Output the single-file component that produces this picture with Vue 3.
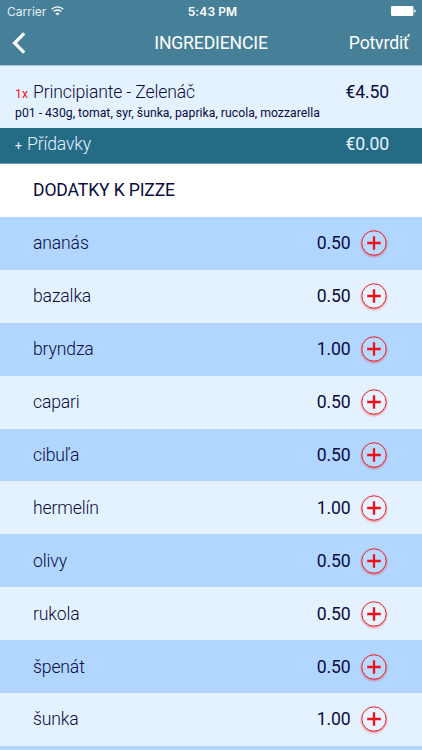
<template>
  <div class="screen">
    <header class="header">
      <div class="status">
        <div class="carrier">
          <span>Carrier</span>
          <svg class="wifi" viewBox="0 0 12 9">
            <path d="M0.5 3.1a7.8 7.8 0 0 1 11 0" />
            <path d="M2.4 5.2a5.1 5.1 0 0 1 7.2 0" />
            <path class="dot" d="M6 9L4 7a2.9 2.9 0 0 1 4 0z" />
          </svg>
        </div>
        <span class="time">5:43 PM</span>
        <svg class="battery" viewBox="0 0 25 10">
          <rect x="0" y="0" width="22.4" height="10" rx="1.2" />
          <path d="M23.2 3.2q1.5 .4 1.5 1.8t-1.5 1.8z" />
        </svg>
      </div>
      <nav class="navbar">
        <svg class="back" viewBox="0 0 14 22">
          <path d="M12.2 1.3L2.6 11L12.2 20.7" />
        </svg>
        <h1>INGREDIENCIE</h1>
        <a class="confirm">Potvrdiť</a>
      </nav>
    </header>

    <section class="product">
      <div class="line">
        <span class="count">1x</span>
        <span class="name">Principiante - Zelenáč</span>
        <span class="price">€4.50</span>
      </div>
      <div class="description">p01 - 430g, tomat, syr, šunka, paprika, rucola, mozzarella</div>
    </section>

    <section class="extras">
      <span class="plus">+</span>
      <span class="name">Přídavky</span>
      <span class="price">€0.00</span>
    </section>

    <h2>DODATKY K PIZZE</h2>

    <ul class="list">
      <li v-for="item in ingredients" :key="item.name">
        <span class="name">{{ item.name }}</span>
        <span class="price">{{ item.price }}</span>
        <button class="add">
          <svg viewBox="0 0 26 26">
            <circle cx="13" cy="13" r="12.2" />
            <path d="M6.2 13h13.6M13 6.2v13.6" />
          </svg>
        </button>
      </li>
      <li></li>
    </ul>
  </div>
</template>

<script setup>
import { ref } from 'vue';

const ingredients = ref([
  { name: 'ananás', price: '0.50' },
  { name: 'bazalka', price: '0.50' },
  { name: 'bryndza', price: '1.00' },
  { name: 'capari', price: '0.50' },
  { name: 'cibuľa', price: '0.50' },
  { name: 'hermelín', price: '1.00' },
  { name: 'olivy', price: '0.50' },
  { name: 'rukola', price: '0.50' },
  { name: 'špenát', price: '0.50' },
  { name: 'šunka', price: '1.00' },
]);
</script>

<style>
body {
  margin: 0;
  overflow: hidden;
}
</style>

<style scoped>
.screen {
  height: 750px;
  overflow: hidden;
  background: #fff;
  color: #0b0b40;
  font-family: Roboto, sans-serif;
  font-size: 17.6px;
  letter-spacing: -0.15px;
}

.header {
  height: 65px;
  box-sizing: border-box;
  background: #467f98;
  color: #fff;
}

.status {
  display: grid;
  grid-template-columns: 1fr auto 1fr;
  align-items: center;
  height: 22px;
  padding: 0 6px 0 7px;
  font-family: Inter, sans-serif;
  font-size: 12px;
  letter-spacing: 0;
}

.carrier {
  display: flex;
  align-items: center;
  gap: 5px;
  color: #e6f0f4;
}

.wifi {
  width: 13px;
  height: 9.5px;
  fill: none;
  stroke: #fff;
  stroke-width: 1.4;
}

.wifi .dot {
  fill: #fff;
  stroke: none;
}

.time {
  padding-left: 2px;
  font-weight: 600;
  letter-spacing: 0.1px;
}

.battery {
  justify-self: end;
  width: 25px;
  height: 10px;
  fill: #fff;
}

.navbar {
  display: grid;
  grid-template-columns: 1fr auto 1fr;
  align-items: center;
  height: 42px;
  padding: 0 12px;
}

.back {
  width: 14px;
  height: 22px;
  fill: none;
  stroke: #fff;
  stroke-width: 3.2;
}

h1 {
  margin: 0;
  font-size: 17.6px;
  font-weight: 400;
}

.confirm {
  justify-self: end;
  padding-right: 1px;
}

.product {
  height: 63px;
  box-sizing: border-box;
  padding: 14px 33px 0 15px;
  background: #e4f2ff;
  border-top: 1px solid #a9cbdb;
}

.line {
  display: flex;
  align-items: baseline;
  height: 24px;
  line-height: 24px;
}

.count {
  width: 18px;
  color: #f01820;
  font-size: 12.3px;
  letter-spacing: 0;
}

.name {
  flex: 1;
  font-weight: 300;
}

.description {
  font-size: 12.25px;
  letter-spacing: 0;
  line-height: 18px;
  white-space: nowrap;
}

.extras {
  display: flex;
  align-items: baseline;
  height: 36px;
  box-sizing: border-box;
  padding: 0 33px 0 15px;
  background: #246b85;
  border-bottom: 1px solid #6d9fb1;
  color: #e4f2ff;
  line-height: 33px;
}

.plus {
  width: 12px;
  font-size: 12.3px;
}

h2 {
  height: 53px;
  margin: 0;
  padding-left: 33px;
  font-size: 17.6px;
  font-weight: 400;
  line-height: 52px;
}

.list {
  margin: 0;
  padding: 0;
  list-style: none;
}

li {
  display: flex;
  align-items: center;
  height: 52.9px;
  box-sizing: border-box;
  padding: 0 35px 0 33px;
  background: #b1d6ff;
}

li:nth-child(even) {
  background: #e4f2ff;
}

.add {
  width: 26px;
  height: 26px;
  margin-left: 10.5px;
  padding: 0;
  border: 0;
  border-radius: 50%;
  background: none;
}

.add svg {
  display: block;
  overflow: visible;
  fill: none;
  stroke: #e5252e;
  stroke-width: 1;
  filter: drop-shadow(0 1px 1px rgba(255, 0, 0, 0.5));
}

.add circle {
  fill: #e8f3ff;
}

li:nth-child(odd) .add circle {
  fill: #b9daff;
}

.add path {
  stroke: #ee1119;
  stroke-width: 2.3;
}
</style>
